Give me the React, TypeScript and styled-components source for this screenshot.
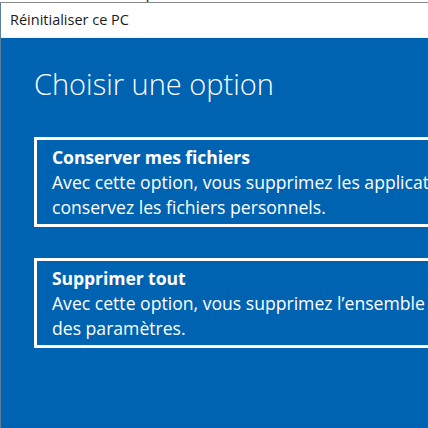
import React from 'react';
import styled, { createGlobalStyle } from 'styled-components';

const GlobalStyle = createGlobalStyle`
  html, body {
    margin: 0;
    padding: 0;
    width: 428px;
    height: 428px;
    overflow: hidden;
    background: #ffffff;
  }
  * {
    box-sizing: border-box;
  }
`;

const Screen = styled.div`
  display: flex;
  flex-direction: column;
  width: 428px;
  height: 428px;
  overflow: hidden;
  font-family: 'Open Sans', 'Noto Sans', sans-serif;
`;

// bit of the window behind, peeking over the top edge
const BehindStrip = styled.div`
  height: 3px;
  overflow: hidden;
  padding-left: 64px;
  background: #ffffff;
  border-bottom: 1px solid #8a8a8a;
  flex-shrink: 0;
`;

const BehindText = styled.div`
  margin-top: -14px;
  font-size: 16px;
  line-height: 16px;
  color: #222;
  white-space: nowrap;
`;

const Window = styled.div`
  flex: 1;
  display: flex;
  flex-direction: column;
  border-left: 1px solid #5a7f9c;
`;

const TitleBar = styled.div`
  height: 35px;
  flex-shrink: 0;
  display: flex;
  align-items: center;
  padding: 0 0 2px 9px;
  background: #ffffff;
  border-bottom: 1px solid #e8f4f6;
  font-size: 14.5px;
  color: #1a1a1a;
`;

const Content = styled.div`
  flex: 1;
  background: #0063b1;
  padding: 26px 0 0 32px;
  color: #ffffff;
  border-left: 1px solid #1b5f92;
`;

const Heading = styled.h1`
  margin: 0 0 33px 0;
  font-size: 29px;
  font-weight: 300;
  line-height: 40px;
  white-space: nowrap;
`;

const OptionList = styled.div`
  display: flex;
  flex-direction: column;
  gap: 31px;
`;

const OptionCard = styled.div`
  width: 600px;
  border: 3px solid #ffffff;
  padding: 5px 16px 4px 15px;
  font-size: 17.6px;
  line-height: 25px;
  white-space: nowrap;
  overflow: hidden;
`;

const OptionTitle = styled.div`
  font-weight: 700;
  letter-spacing: -0.1px;
`;

const OptionText = styled.div`
  font-weight: 400;
`;

type Option = {
  title: string;
  lines: string[];
};

const options: Option[] = [
  {
    title: 'Conserver mes fichiers',
    lines: [
      'Avec cette option, vous supprimez les applications et paramètres, mais',
      'conservez les fichiers personnels.',
    ],
  },
  {
    title: 'Supprimer tout',
    lines: [
      'Avec cette option, vous supprimez l\u2019ensemble des fichiers, applications et',
      'des paramètres.',
    ],
  },
];

export default function App() {
  return (
    <>
      <GlobalStyle />
      <Screen>
        <BehindStrip>
          <BehindText>windows Update</BehindText>
        </BehindStrip>
        <Window>
          <TitleBar>Réinitialiser ce PC</TitleBar>
          <Content>
            <Heading>Choisir une option</Heading>
            <OptionList>
              {options.map((o) => (
                <OptionCard key={o.title}>
                  <OptionTitle>{o.title}</OptionTitle>
                  {o.lines.map((l) => (
                    <OptionText key={l}>{l}</OptionText>
                  ))}
                </OptionCard>
              ))}
            </OptionList>
          </Content>
        </Window>
      </Screen>
    </>
  );
}
